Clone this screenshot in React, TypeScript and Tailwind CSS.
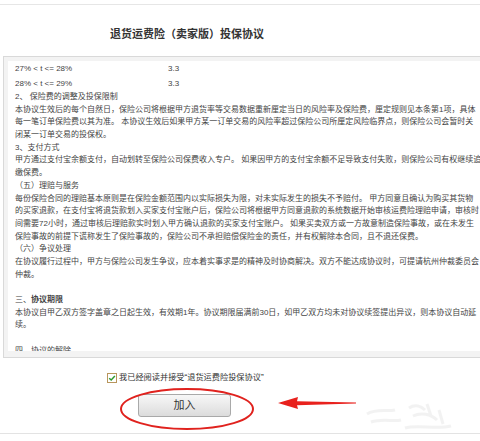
const lines: (string | JSX.Element)[] = [
  '2、 保险费的调整及投保限制',
  '本协议生效后的每个自然日，保险公司将根据甲方退货率等交易数据重新厘定当日的风险率及保险费，厘定规则见本条第1项，具体',
  '每一笔订单保险费以其为准。 本协议生效后如果甲方某一订单交易的风险率超过保险公司所厘定风险临界点，则保险公司会暂时关',
  '闭某一订单交易的投保权。',
  '3、支付方式',
  '甲方通过支付宝余额支付，自动划转至保险公司保费收入专户。 如果因甲方的支付宝余额不足导致支付失败，则保险公司有权继续追',
  '缴保费。',
  '（五）理赔与服务',
  '每份保险合同的理赔基本原则是在保险金额范围内以实际损失为限，对未实际发生的损失不予赔付。 甲方同意且确认为购买其货物',
  '的买家退款，在支付宝将退货款划入买家支付宝账户后，保险公司将根据甲方同意退款的系统数据开始审核运费险理赔申请，审核时',
  '间需要72小时，通过审核后理赔款实时划入甲方确认退款的买家支付宝账户。 如果买卖双方或一方故意制造保险事故，或在未发生',
  '保险事故的前提下谎称发生了保险事故的，保险公司不承担赔偿保险金的责任，并有权解除本合同，且不退还保费。',
  '（六）争议处理',
  '在协议履行过程中，甲方与保险公司发生争议，应本着实事求是的精神及时协商解决。双方不能达成协议时，可提请杭州仲裁委员会',
  '仲裁。',
  '',
  <>三、<b className="font-bold">协议期限</b></>,
  '本协议自甲乙双方签字盖章之日起生效，有效期1年。协议期限届满前30日，如甲乙双方均未对协议续签提出异议，则本协议自动延',
  '续。',
  '',
  '四、协议的解除',
];

function Checkbox() {
  return (
    <span className="w-[10px] h-[10px] border border-[#b8965c] bg-white flex items-center justify-center">
      <svg viewBox="0 0 10 10" className="w-[8px] h-[8px]">
        <path d="M1.5 5.2 L4 7.6 L8.6 2.4" fill="none" stroke="#2f9a2f" strokeWidth="1.8" />
      </svg>
    </span>
  );
}

export default function App() {
  return (
    <div className="w-[480px] h-[441px] overflow-hidden bg-white relative text-[#444] font-['Liberation_Sans','Noto_Sans_CJK_SC',sans-serif]">
      <div className="h-[4px]" />
      <div className="border-t border-[#e6e6e6]" />

      {/* title */}
      <div className="pl-[110px] pt-[21px] h-[51px] text-[11px] leading-[16px] font-bold text-[#333]">
        退货运费险（卖家版）投保协议
      </div>

      {/* agreement box */}
      <div className="ml-[3px] w-[520px] border-t border-l border-b border-[#d9d9d9] bg-[#f3f3f3] pt-[4px] pl-[4px] pb-[6px]">
        <div className="bg-white h-[290px] overflow-hidden pl-[7px] pt-[1px] text-[8px] whitespace-nowrap">
          <div className="flex leading-[14.5px]">
            <span className="w-[153px]">27% &lt; t &lt;= 28%</span>
            <span>3.3</span>
          </div>
          <div className="flex leading-[14.5px]">
            <span className="w-[153px]">28% &lt; t &lt;= 29%</span>
            <span>3.3</span>
          </div>
          {lines.map((l, i) => (
            <div key={i} className="h-[12.7px] leading-[12.7px]">
              {l}
            </div>
          ))}
        </div>
      </div>

      {/* accept */}
      <div className="flex items-center pl-[107px] mt-[15px] gap-[2px] h-[10px]">
        <Checkbox />
        <span className="text-[8.2px] leading-[10px] text-[#333]">我已经阅读并接受“退货运费险投保协议”</span>
      </div>

      <div className="pl-[138px] mt-[9px]">
        <button className="w-[93px] h-[23px] rounded-[3px] border border-[#a9a9a9] bg-gradient-to-b from-[#f7f7f7] to-[#dcdcdc] text-[11px] text-[#333]">
          加入
        </button>
      </div>

      <div className="absolute left-0 right-0 top-[433px] border-t border-[#e3e3e3]" />

      {/* red annotation */}
      <svg className="absolute left-[119px] top-[387px]" width="136" height="44" viewBox="0 0 136 44">
        <ellipse cx="68" cy="22" rx="66" ry="20" fill="none" stroke="#e0221e" strokeWidth="2" />
      </svg>
      <svg className="absolute left-[278px] top-[396px]" width="80" height="14" viewBox="0 0 80 14">
        <path d="M0 7 L20 1 L19 5.2 L78 6.4 L78 7.4 L19 9.2 L20 13 Z" fill="#e8211d" />
      </svg>

      {/* faint watermark */}
      <svg className="absolute left-[365px] top-[400px] opacity-25" width="90" height="36" viewBox="0 0 90 36">
        <path d="M2 14 C12 8 22 12 30 10 M6 22 C18 18 28 22 36 20 M44 8 C50 4 56 6 60 10 M48 16 C56 12 66 14 72 20 M40 28 C54 24 70 30 86 26 M62 4 L66 16 M74 10 L78 24" fill="none" stroke="#cfcfcf" strokeWidth="3" />
      </svg>
    </div>
  );
}
